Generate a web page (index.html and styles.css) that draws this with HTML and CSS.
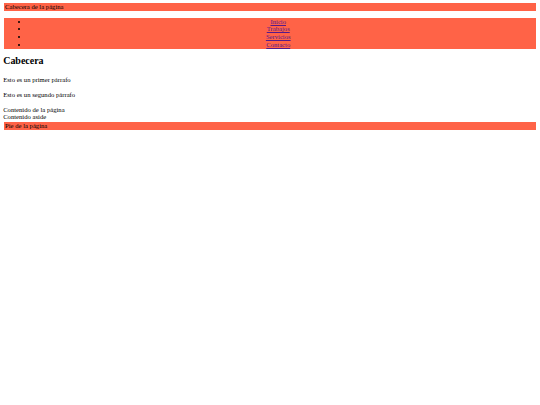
FILE: index.html
```html
<!DOCTYPE html>
<html lang="es">
<head>
<meta charset="utf-8">
<title>Página</title>
<link rel="stylesheet" href="styles.css">
</head>
<body>
<header class="site-header">Cabecera de la página</header>
<nav class="site-nav">
  <ul class="nav-list">
    <li><a href="#">Inicio</a></li>
    <li><a href="#">Trabajos</a></li>
    <li><a href="#">Servicios</a></li>
    <li><a href="#">Contacto</a></li>
  </ul>
</nav>
<section class="main">
  <h1 class="title">Cabecera</h1>
  <p class="para">Esto es un primer párrafo</p>
  <p class="para">Esto es un segundo párrafo</p>
  <div class="content">Contenido de la página</div>
  <aside class="aside">Contenido aside</aside>
</section>
<footer class="site-footer">Pie de la página</footer>
</body>
</html>
```

FILE: styles.css
```css
html {
  background: #ffffff;
}
body {
  margin: 3.2px;
  font-family: "Liberation Serif", "Times New Roman", serif;
  font-size: 6.65px;
  line-height: 7.75px;
  color: #000000;
}
.site-header,
.site-footer {
  background: #ff6347;
  margin: 0 1.3px;
  padding: 0.2px 0.6px;
}
.site-footer {
  margin-top: 0.6px;
}
.nav-list {
  background: #ff6347;
  margin: 6.4px 1.3px;
  padding: 0 8.5px 0 25px;
  list-style: disc;
  text-align: center;
}
.nav-list a {
  color: #551a8b;
}
.title {
  font-size: 1.5em;
  line-height: 11.5px;
  font-weight: bold;
  margin: 6.4px 0 9.6px;
}
.para {
  margin: 7px 0;
}
```
